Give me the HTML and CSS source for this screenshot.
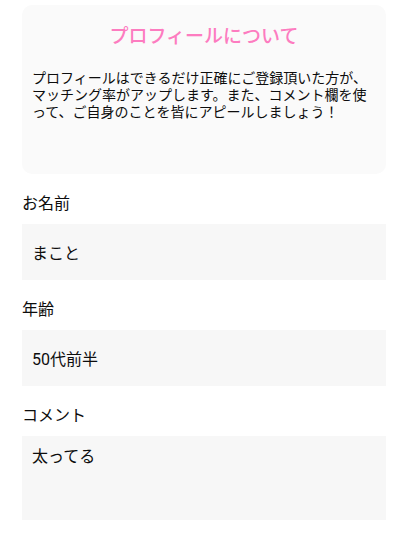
FILE: index.html
```html
<!DOCTYPE html>
<html lang="ja">
<head>
<meta charset="utf-8">
<title>プロフィール</title>
<link rel="stylesheet" href="styles.css">
</head>
<body>
<div class="page">
  <section class="info-card">
    <h1 class="info-title">プロフィールについて</h1>
    <p class="info-text">プロフィールはできるだけ正確にご登録頂いた方が、マッチング率がアップします。また、コメント欄を使って、ご自身のことを皆にアピールしましょう！</p>
  </section>
  <div class="field">
    <div class="field-label">お名前</div>
    <div class="field-value">まこと</div>
  </div>
  <div class="field">
    <div class="field-label">年齢</div>
    <div class="field-value">50代前半</div>
  </div>
  <div class="field">
    <div class="field-label">コメント</div>
    <div class="field-value field-multi">太ってる</div>
  </div>
</div>
</body>
</html>
```
FILE: styles.css
```css
html, body {
  margin: 0;
  padding: 0;
  background: #ffffff;
}
body {
  font-family: Roboto, "Noto Sans CJK JP", sans-serif;
  color: #0d0d0d;
}
.page {
  padding: 5px 8px 0 22px;
  display: flex;
  flex-direction: column;
}
.info-card {
  background: #fafafa;
  border-radius: 10px;
  height: 169px;
  box-sizing: border-box;
  padding: 20px 10px 0 10px;
}
.info-title {
  margin: 0;
  font-size: 19px;
  line-height: 24px;
  font-weight: 500;
  color: #fd7cc0;
  text-align: center;
}
.info-text {
  margin: 21px 0 0 0;
  font-size: 14px;
  line-height: 17px;
}
.field {
  margin-top: 18px;
  display: flex;
  flex-direction: column;
  gap: 8px;
}
.field-label {
  font-size: 16px;
  line-height: 24px;
}
.field-value {
  background: #f7f7f7;
  height: 56px;
  box-sizing: border-box;
  padding: 0 10px;
  font-size: 16px;
  display: flex;
  align-items: center;
}
.field-multi {
  height: 84px;
  align-items: flex-start;
  padding-top: 10px;
  line-height: 22px;
}
```
